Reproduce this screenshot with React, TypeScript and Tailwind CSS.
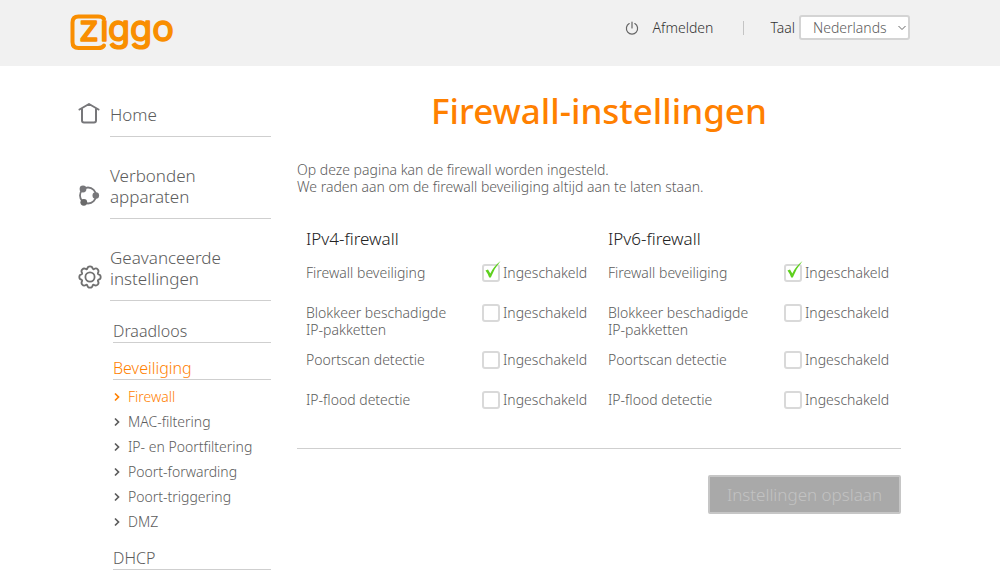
import { useState } from 'react';

const subItems = ['Firewall', 'MAC-filtering', 'IP- en Poortfiltering', 'Poort-forwarding', 'Poort-triggering', 'DMZ'];

const firewallOptions = [
    { key: 'beveiliging', label: 'Firewall beveiliging', on: true },
    { key: 'pakketten', label: 'Blokkeer beschadigde IP-pakketten', on: false },
    { key: 'poortscan', label: 'Poortscan detectie', on: false },
    { key: 'flood', label: 'IP-flood detectie', on: false },
];

function Logo() {
    return (
        <svg width="108" height="54" viewBox="0 0 108 54" role="img" aria-label="Ziggo" className="text-[#f98e00]">
            <path d="M35 19C34 17 32 16.500 29 16.500H9.500Q3.500 16.500 3.500 22.500V42Q3.500 48 9.500 48H29C32 48 34 47.500 35 45.500" fill="none" stroke="currentColor" strokeWidth="4" strokeLinecap="round" />
            <text y="41" fontSize="36" fontFamily="Inter, sans-serif" fontWeight="400" fill="currentColor" stroke="currentColor" strokeWidth="1.6" strokeLinejoin="round">
                <tspan x="10">z</tspan>
                <tspan x="31">ı</tspan>
                <tspan x="39">ggo</tspan>
            </text>
        </svg>
    );
}

function HomeIcon() {
    return (
        <svg width="22" height="22" viewBox="0 0 22 22" fill="none" stroke="#77777a" strokeWidth="2" strokeLinecap="round" strokeLinejoin="round" aria-hidden="true">
            <path d="M1.500 6.500 11 1l9.500 5.500" />
            <path d="M4 6v11.500Q4 19.500 6 19.500h10q2 0 2-2V6" />
        </svg>
    );
}

function DevicesIcon() {
    return (
        <svg width="22" height="22" viewBox="0 0 22 22" aria-hidden="true">
            <circle cx="10" cy="10.500" r="8" fill="none" stroke="#77777a" strokeWidth="1.8" />
            <circle cx="5" cy="4" r="3.400" fill="#77777a" />
            <circle cx="17.800" cy="10.500" r="3.300" fill="#77777a" />
            <circle cx="5.800" cy="17.300" r="3.400" fill="#6a6a6a" />
        </svg>
    );
}

function GearIcon() {
    return (
        <svg width="24" height="24" viewBox="0 0 24 24" fill="none" stroke="#707070" strokeWidth="1.8" strokeLinejoin="round" aria-hidden="true">
            <path d="M9.300 3.600Q9.600 1.300 12 1.300T14.700 3.600Q15.200 4.500 16 4.100Q18.200 2.700 19.700 4.300T19.900 8Q19.500 8.900 20.400 9.300Q22.700 9.600 22.700 12T20.400 14.700Q19.500 15.100 19.900 16Q21.300 18.200 19.700 19.700T16 19.900Q15.100 19.500 14.700 20.400Q14.400 22.700 12 22.700T9.300 20.400Q8.900 19.500 8 19.900Q5.800 21.300 4.300 19.700T4.100 16Q4.500 15.100 3.600 14.700Q1.300 14.400 1.300 12T3.600 9.300Q4.500 8.900 4.100 8Q2.700 5.800 4.300 4.300T8 4.100Q8.900 4.500 9.300 3.600Z" />
            <circle cx="12" cy="12" r="4.600" />
        </svg>
    );
}

function PowerIcon() {
    return (
        <svg width="14" height="14" viewBox="0 0 14 14" fill="none" stroke="#666" strokeWidth="1.2" strokeLinecap="round" aria-hidden="true">
            <path d="M4.200 2.600A5.600 5.600 0 1 0 9.800 2.600M7 1v6" />
        </svg>
    );
}

function MainItem({ icon, label }: { icon: React.ReactNode; label: string }) {
    return (
        <a href="#" className="mb-7 flex items-end">
            <span className="w-8 shrink-0 pb-3">{icon}</span>
            <span className="flex-1 border-b border-[#cfcfcf] pb-[11px] pr-10 text-[17px]/[21px]">{label}</span>
        </a>
    );
}

function FirewallColumn({ id, title }: { id: string; title: string }) {
    const [checked, setChecked] = useState(() => firewallOptions.map((o) => o.on));

    return (
        <section className="flex-1 pl-[9px]">
            <h2 className="mb-[14px] text-[17px]/[22px] text-[#222]">{title}</h2>
            {firewallOptions.map((option, i) => (
                <div key={option.key} className="flex min-h-10 items-start pb-[13px]">
                    <span id={`${id}-${option.key}`} className="w-[176px] pr-8">{option.label}</span>
                    <label className="relative flex h-[17px] items-center gap-[3px]">
                        <input
                            type="checkbox"
                            aria-describedby={`${id}-${option.key}`}
                            checked={checked[i]}
                            onChange={() => setChecked(checked.map((c, n) => (n === i ? !c : c)))}
                            className="peer size-[18px] appearance-none rounded-[3px] border-2 border-[#d9d9d9] bg-white"
                        />
                        <svg width="18" height="18" viewBox="0 0 18 18" className="pointer-events-none absolute -top-[3px] left-[2px] hidden peer-checked:block" aria-hidden="true">
                            <path d="M1.500 9.500 4 8.600 6.300 12.500Q9.500 5.500 16.500 0Q10.500 7 6.800 16.500H5.200Q3.800 12.500 1.500 9.500Z" fill="#5fd01f" />
                        </svg>
                        Ingeschakeld
                    </label>
                </div>
            ))}
        </section>
    );
}

export default function App() {
    return (
        <div className="min-h-screen bg-white font-['Noto_Sans',sans-serif] text-sm/[17px] font-light text-[#5c5c5c]">
            <header className="flex h-[66px] items-start justify-between bg-[#f1f1f1] pl-[69px] pr-[90px]">
                <a href="#"><Logo /></a>
                <div className="flex items-center pt-[15px]">
                    <a href="#" className="flex items-center gap-[14px] text-[#333]">
                        <PowerIcon />
                        Afmelden
                    </a>
                    <span className="ml-[30px] mr-[26px] h-3.5 w-px bg-[#c4c4c4]" />
                    <label htmlFor="taal" className="mr-1 text-[#333]">Taal</label>
                    <div className="relative">
                        <select id="taal" className="h-[25px] w-[111px] appearance-none rounded-[3px] border-2 border-[#d4d4d4] bg-white pl-3">
                            <option>Nederlands</option>
                        </select>
                        <svg width="8" height="6" viewBox="0 0 8 6" fill="none" stroke="#666" className="pointer-events-none absolute right-1 top-[10px]" aria-hidden="true">
                            <path d="M.5 1 4 4.500 7.500 1" />
                        </svg>
                    </div>
                </div>
            </header>

            <div className="flex gap-[26px] pl-[78px] pr-[99px]">
                <nav className="w-[193px] shrink-0 pt-[37px]">
                    <MainItem icon={<HomeIcon />} label="Home" />
                    <MainItem icon={<DevicesIcon />} label="Verbonden apparaten" />
                    <MainItem icon={<GearIcon />} label="Geavanceerde instellingen" />
                    <div className="-mt-[7px] pl-[35px]">
                        <a href="#" className="block border-b border-[#cfcfcf] pb-0.5 text-base/[18px]">Draadloos</a>
                        <a href="#" className="mt-4 block border-b border-[#cfcfcf] pb-0.5 text-base/[18px] text-[#ff8000]">Beveiliging</a>
                        <ul className="py-1">
                            {subItems.map((item) => (
                                <li key={item}>
                                    <a href="#" className={item === 'Firewall' ? 'flex h-[25px] items-center gap-2 text-[#ff8000]' : 'flex h-[25px] items-center gap-2'}>
                                        <svg width="7" height="10" viewBox="0 0 7 10" fill="none" stroke="currentColor" strokeWidth="1.7" aria-hidden="true">
                                            <path d="M2 1.500 5.500 5 2 8.500" />
                                        </svg>
                                        {item}
                                    </a>
                                </li>
                            ))}
                        </ul>
                        <a href="#" className="mt-[11px] block border-b border-[#cfcfcf] pb-0.5 text-base/[18px]">DHCP</a>
                    </div>
                </nav>

                <main className="min-w-0 flex-1 pt-[22px]">
                    <h1 className="text-center text-[35px]/[46px] font-medium text-[#ff8000]">Firewall-instellingen</h1>
                    <p className="mt-[27px]">
                        Op deze pagina kan de firewall worden ingesteld.<br />
                        We raden aan om de firewall beveiliging altijd aan te laten staan.
                    </p>
                    <div className="mt-[33px] flex border-b border-[#cfcfcf] pb-[17px]">
                        <FirewallColumn id="ipv4" title="IPv4-firewall" />
                        <FirewallColumn id="ipv6" title="IPv6-firewall" />
                    </div>
                    <div className="mt-[26px] flex justify-end">
                        <button type="button" disabled className="h-[39px] w-[193px] rounded-[2px] border-2 border-[#c6c6c6] bg-[#a9a9a9] text-[17px] text-[#c2c2c2]">
                            Instellingen opslaan
                        </button>
                    </div>
                </main>
            </div>
        </div>
    );
}
